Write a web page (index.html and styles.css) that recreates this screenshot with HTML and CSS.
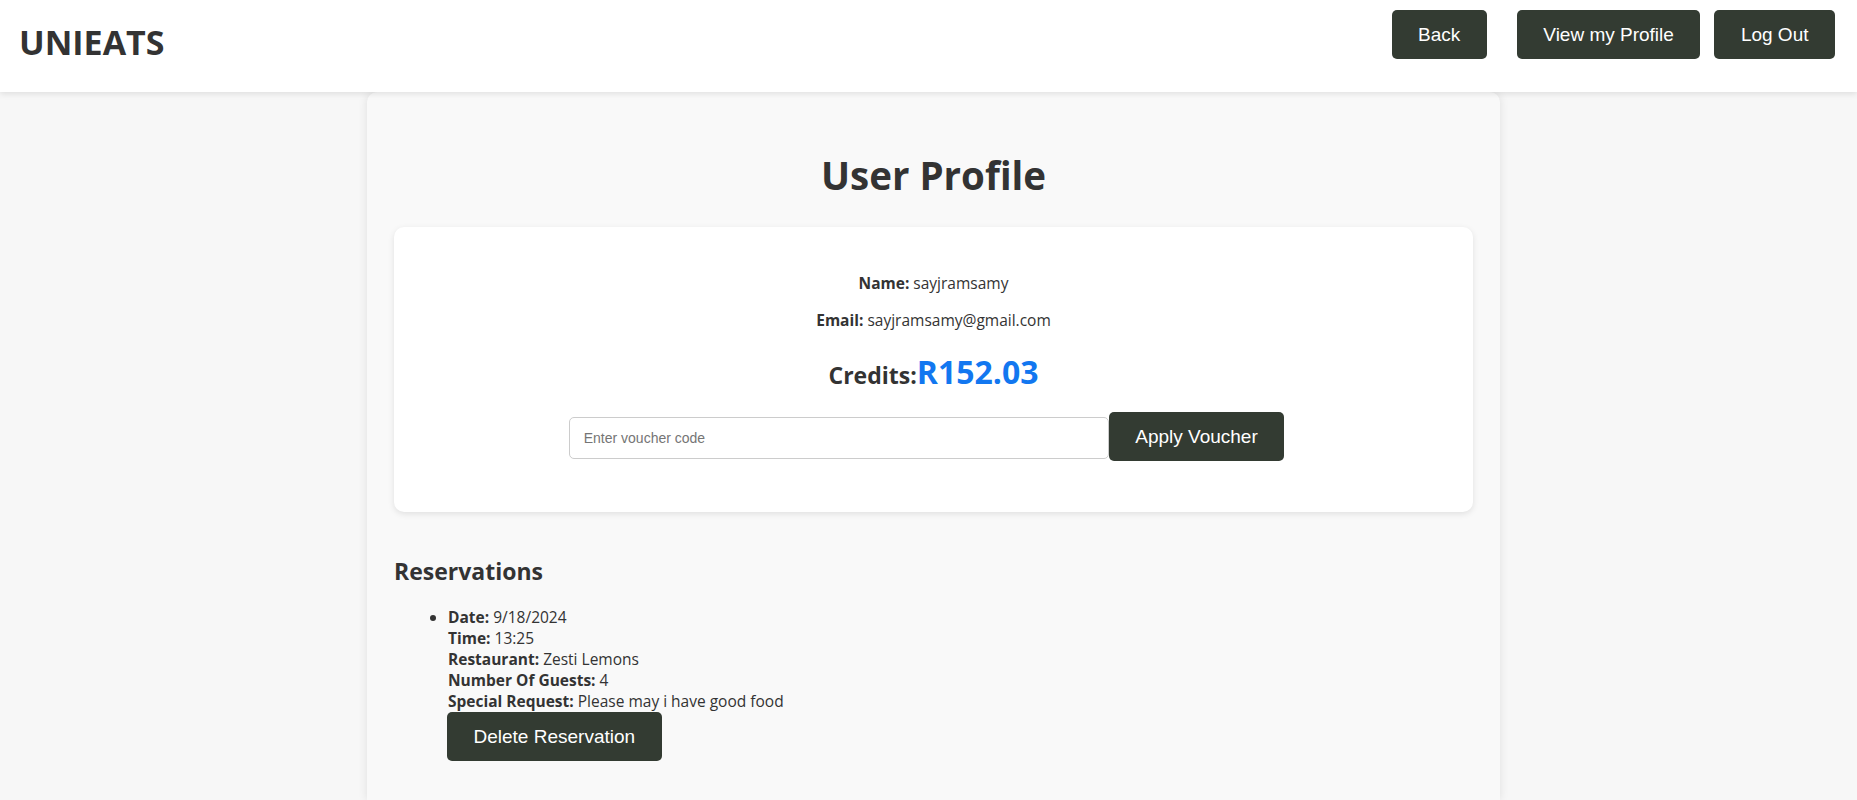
FILE: index.html
```html
<!DOCTYPE html>
<html lang="en">
<head>
<meta charset="utf-8">
<title>UNIEATS - User Profile</title>
<link rel="stylesheet" href="styles.css">
</head>
<body>
<header class="header">
  <div class="logo">UNIEATS</div>
  <nav class="nav">
    <button class="btn btn-back">Back</button>
    <button class="btn btn-profile">View my Profile</button>
    <button class="btn">Log Out</button>
  </nav>
</header>
<div class="wrap">
  <main class="card">
    <h1 class="title">User Profile</h1>
    <section class="info">
      <p class="line"><strong>Name:</strong> sayjramsamy</p>
      <p class="line line-email"><strong>Email:</strong> sayjramsamy@gmail.com</p>
      <h3 class="credits">Credits:<span class="amount">R152.03</span></h3>
      <form class="voucher">
        <input class="voucher-input" type="text" placeholder="Enter voucher code">
        <button class="btn btn-apply" type="button">Apply Voucher</button>
      </form>
    </section>
    <h2 class="res-title">Reservations</h2>
    <ul class="res-list">
      <li>
        <strong>Date:</strong> 9/18/2024<br>
        <strong>Time:</strong> 13:25<br>
        <strong>Restaurant:</strong> Zesti Lemons<br>
        <strong>Number Of Guests:</strong> 4<br>
        <strong>Special Request:</strong> Please may i have good food
        <button class="btn btn-delete">Delete Reservation</button>
      </li>
    </ul>
  </main>
</div>
</body>
</html>
```

FILE: styles.css
```css
html, body {
  margin: 0;
  padding: 0;
}
body {
  background: #f7f7f7;
  font-family: "Open Sans", "Noto Sans", sans-serif;
  color: #333;
  height: 800px;
  overflow: hidden;
}
.header {
  height: 92px;
  box-sizing: border-box;
  background: #fff;
  display: flex;
  justify-content: space-between;
  align-items: flex-start;
  padding: 0 22px 0 19px;
  box-shadow: 0 2px 6px rgba(0, 0, 0, 0.1);
  position: relative;
  z-index: 2;
}
.logo {
  font-size: 34px;
  font-weight: 700;
  line-height: 46px;
  margin-top: 19px;
  color: #333;
}
.nav {
  display: flex;
  margin-top: 10px;
}
.btn {
  background: #333b32;
  color: #fff;
  font-family: "Liberation Sans", Arial, sans-serif;
  font-size: 19px;
  height: 49px;
  padding: 0 26.5px;
  border: none;
  border-radius: 5px;
  cursor: pointer;
}
.btn-back {
  margin-right: 30px;
}
.btn-profile {
  margin-right: 14px;
}
.wrap {
  display: flex;
  justify-content: center;
  padding-left: 10px;
}
.card {
  width: 1133px;
  box-sizing: border-box;
  background: #f9f9f9;
  border-radius: 10px 10px 0 0;
  box-shadow: 0 0 10px rgba(0, 0, 0, 0.1);
  padding: 0 27px 0;
  height: 708px;
  position: relative;
  z-index: 1;
}
.title {
  font-size: 38.5px;
  font-weight: 700;
  line-height: 54px;
  text-align: center;
  margin: 56px 0 25px;
  color: #333;
}
.info {
  background: #fff;
  border-radius: 10px;
  box-shadow: 0 2px 6px rgba(0, 0, 0, 0.1);
  text-align: center;
  padding: 45px 20px 51px;
}
.line {
  font-size: 15.5px;
  line-height: 22px;
  margin: 0;
}
.line-email {
  margin-top: 15px;
}
.credits {
  font-size: 23px;
  font-weight: 700;
  line-height: 36px;
  margin: 23px 0 0;
}
.amount {
  font-size: 32px;
  line-height: 36px;
  color: #1277f0;
}
.voucher {
  display: flex;
  justify-content: center;
  align-items: flex-start;
  margin-top: 19px;
  padding-right: 14px;
}
.voucher-input {
  width: 540px;
  height: 42px;
  box-sizing: border-box;
  margin-top: 5px;
  border: 1px solid #ccc;
  border-radius: 5px;
  padding: 0 14px;
  font-family: "Liberation Sans", Arial, sans-serif;
  font-size: 14px;
  color: #333;
  background: #fff;
}
.voucher-input::placeholder {
  color: #757575;
}
.res-title {
  font-size: 23px;
  font-weight: 700;
  line-height: 30px;
  margin: 44px 0 0;
}
.res-list {
  margin: 21px 0 0;
  padding-left: 54px;
  font-size: 15.5px;
  line-height: 21px;
}
.btn-delete {
  display: block;
  margin: 0;
  margin-left: -1px;
}
```
